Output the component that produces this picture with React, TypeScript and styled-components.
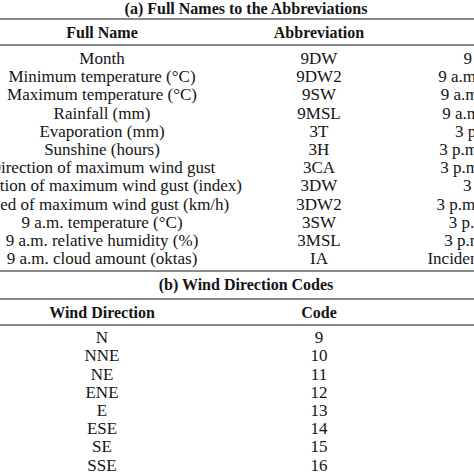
import React from 'react';
import styled, { createGlobalStyle } from 'styled-components';

const GlobalStyle = createGlobalStyle`
  html, body {
    margin: 0;
    padding: 0;
    background: #ffffff;
  }
  body {
    font-family: "Liberation Serif", "Times New Roman", serif;
    color: #141414;
  }
`;

const Sheet = styled.div`
  width: 474px;
  height: 474px;
  overflow: hidden;
  background: #ffffff;
`;

const Caption = styled.div<{ $height: number; $lineHeight: number }>`
  height: ${(p) => p.$height}px;
  line-height: ${(p) => p.$lineHeight}px;
  padding-left: 18px;
  display: flex;
  justify-content: center;
  align-items: ${(p) => (p.$lineHeight < p.$height - 4 ? 'center' : 'flex-start')};
  font-size: 16px;
  font-weight: bold;
  white-space: nowrap;
`;

const Grid = styled.div<{ $cols: string }>`
  display: grid;
  grid-template-columns: ${(p) => p.$cols};
`;

const HeadRow = styled(Grid)`
  box-sizing: border-box;
  height: 28px;
  padding-top: 2px;
  border-top: 2px solid #8a8a8a;
  border-bottom: 2px solid #8a8a8a;
  font-weight: bold;
  font-size: 16px;
`;

const Body = styled.div<{ $top: number; $closed?: boolean }>`
  padding-top: ${(p) => p.$top}px;
  padding-bottom: ${(p) => (p.$closed ? 3 : 0)}px;
  border-bottom: ${(p) => (p.$closed ? '2px solid #8a8a8a' : 'none')};
`;

const Row = styled(Grid)`
  height: 18.2px;
  font-size: 17px;
`;

const Cell = styled.div`
  display: flex;
  justify-content: center;
  align-items: center;
  white-space: nowrap;
  min-width: 0;
`;

const namesCols = '204px 230px 204px';
const windCols = '204px 230px';

const names: [string, string, string][] = [
  ['Month', '9DW', '9 a.m. wind direction'],
  ['Minimum temperature (°C)', '9DW2', '9 a.m. wind direction (km/h)'],
  ['Maximum temperature (°C)', '9SW', '9 a.m. wind speed (km/h)xx'],
  ['Rainfall (mm)', '9MSL', '9 a.m. mean sea level (hPa)'],
  ['Evaporation (mm)', '3T', '3 p.m. temperature (°C)'],
  ['Sunshine (hours)', '3H', '3 p.m. relative humidity (%)'],
  ['Direction of maximum wind gust', '3CA', '3 p.m. cloud amount (oktas)'],
  ['Direction of maximum wind gust (index)', '3DW', '3 p.m. wind direction'],
  ['Speed of maximum wind gust (km/h)', '3DW2', '3 p.m. wind direction (index)'],
  ['9 a.m. temperature (°C)', '3SW', '3 p.m. wind speed (km/h)'],
  ['9 a.m. relative humidity (%)', '3MSL', '3 p.m. MSL pressure (hPa)'],
  ['9 a.m. cloud amount (oktas)', 'IA', 'Incidence of rain today (yes/no)'],
];

const wind: [string, number][] = [
  ['N', 9],
  ['NNE', 10],
  ['NE', 11],
  ['ENE', 12],
  ['E', 13],
  ['ESE', 14],
  ['SE', 15],
  ['SSE', 16],
];

export default function App() {
  return (
    <Sheet>
      <GlobalStyle />
      <Caption $height={18} $lineHeight={12}>
        (a) Full Names to the Abbreviations
      </Caption>
      <HeadRow $cols={namesCols}>
        <Cell>Full Name</Cell>
        <Cell>Abbreviation</Cell>
        <Cell>Full Name</Cell>
      </HeadRow>
      <Body $top={3} $closed>
        {names.map(([full, abbr, other]) => (
          <Row key={abbr} $cols={namesCols}>
            <Cell>{full}</Cell>
            <Cell>{abbr}</Cell>
            <Cell>{other}</Cell>
          </Row>
        ))}
      </Body>
      <Caption $height={26} $lineHeight={20}>
        (b) Wind Direction Codes
      </Caption>
      <HeadRow $cols={windCols}>
        <Cell>Wind Direction</Cell>
        <Cell>Code</Cell>
      </HeadRow>
      <Body $top={2}>
        {wind.map(([dir, code]) => (
          <Row key={dir} $cols={windCols}>
            <Cell>{dir}</Cell>
            <Cell>{code}</Cell>
          </Row>
        ))}
      </Body>
    </Sheet>
  );
}
